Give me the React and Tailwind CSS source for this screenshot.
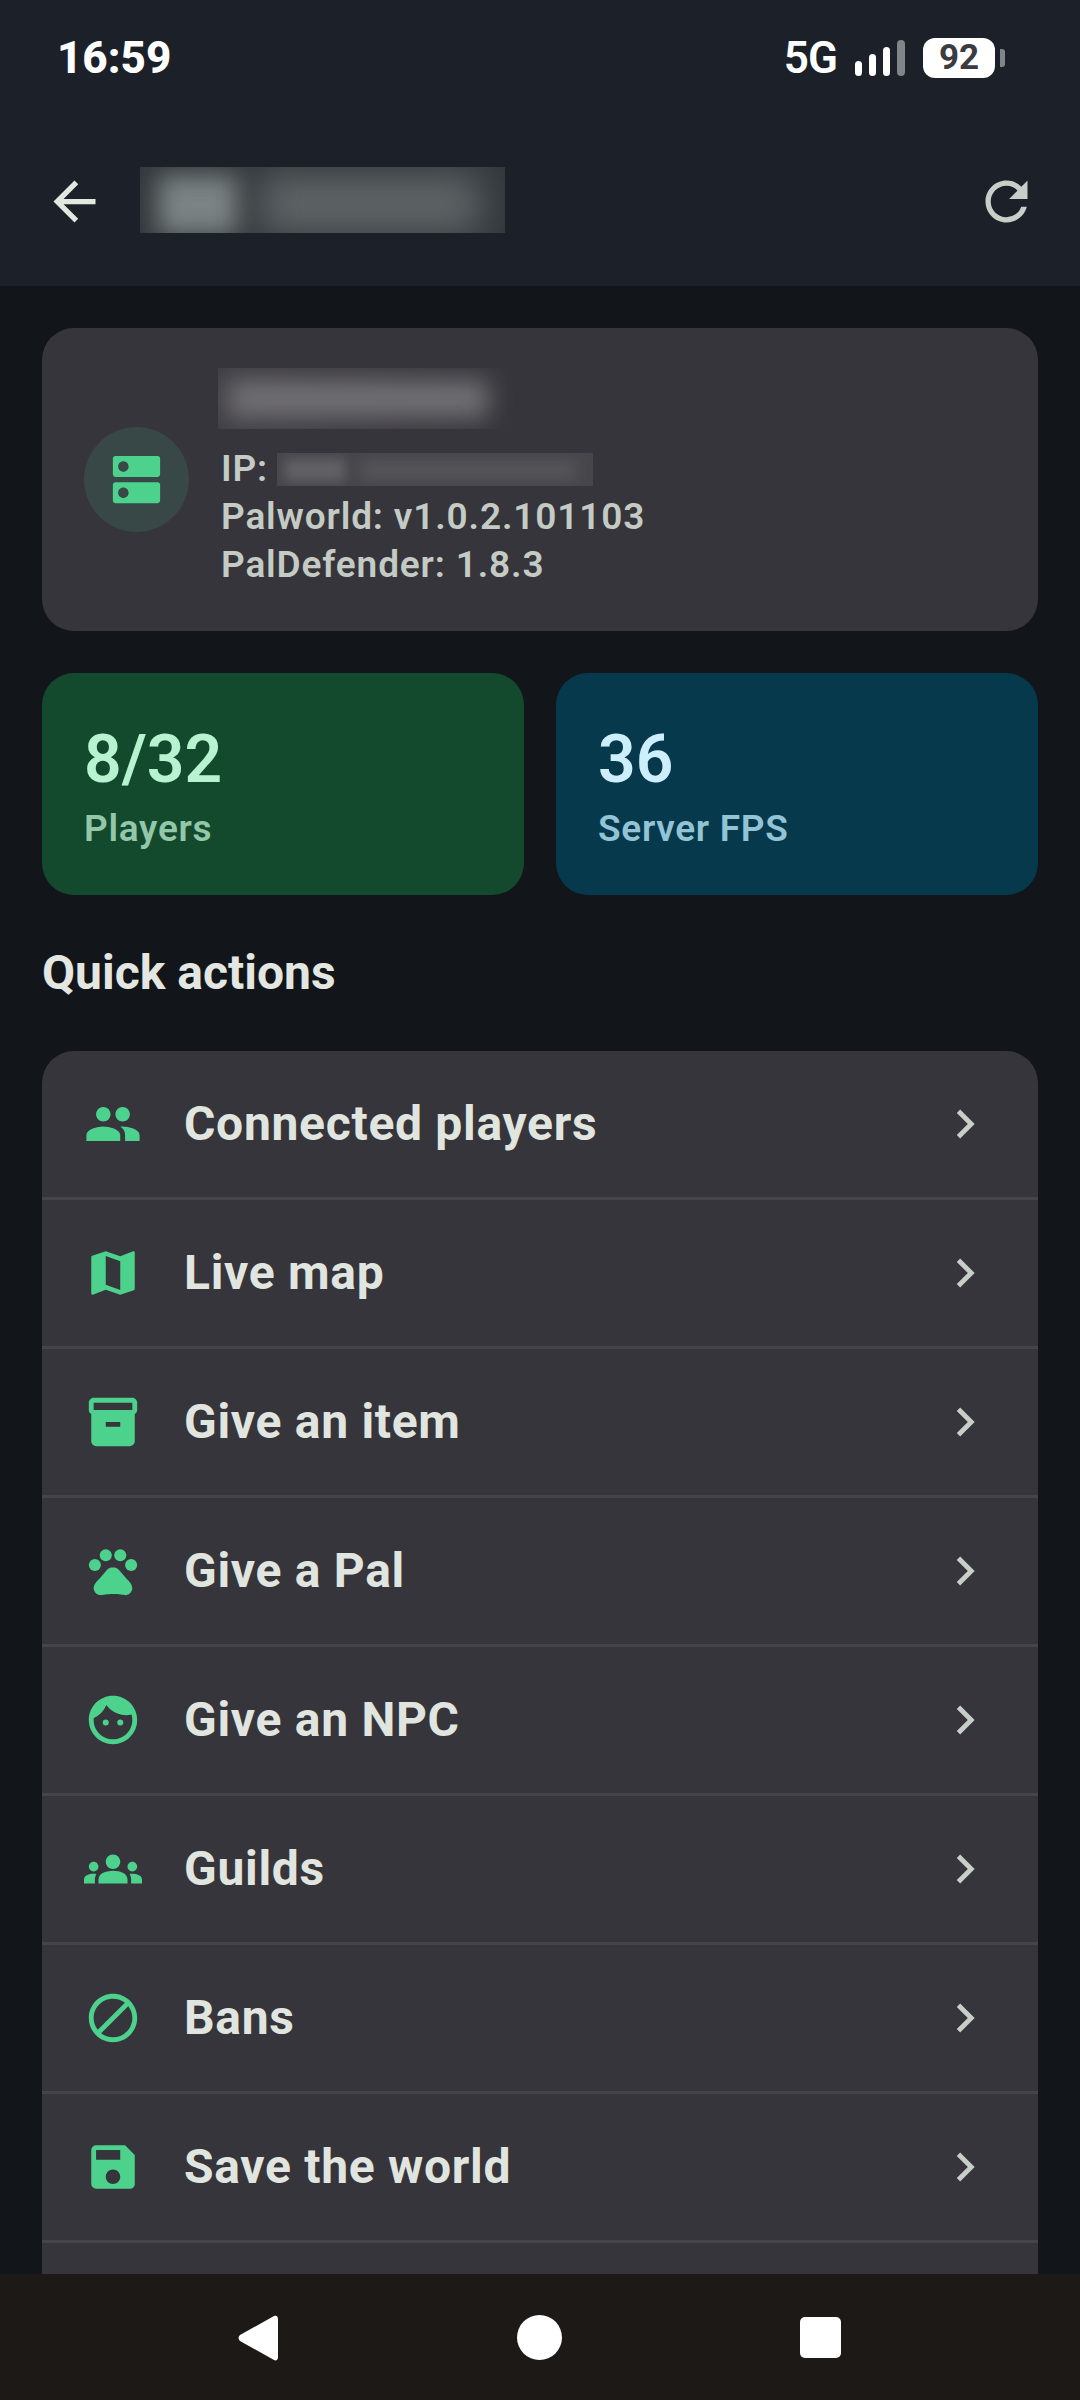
import {
  MdArrowBack,
  MdRefresh,
  MdDns,
  MdPeople,
  MdMap,
  MdInventory2,
  MdPets,
  MdFace,
  MdGroups,
  MdBlock,
  MdSave,
  MdChevronRight,
} from "react-icons/md";

const actions = [
  { label: "Connected players", icon: MdPeople },
  { label: "Live map", icon: MdMap },
  { label: "Give an item", icon: MdInventory2 },
  { label: "Give a Pal", icon: MdPets },
  { label: "Give an NPC", icon: MdFace },
  { label: "Guilds", icon: MdGroups },
  { label: "Bans", icon: MdBlock },
  { label: "Save the world", icon: MdSave },
];

function StatusBar() {
  return (
    <div className="h-[116px] flex items-start justify-between pt-[36px] pl-[57px] pr-[75px]">
      <span className="text-[44px] leading-[44px] font-extrabold text-white">16:59</span>
      <div className="flex items-center">
        <span className="text-[44px] leading-[44px] font-semibold text-white tracking-[-1px]">5G</span>
        <div className="ml-[18px] flex items-end gap-[7px] h-[36px]">
          <div className="w-[7px] h-[15px] rounded-full bg-white" />
          <div className="w-[7px] h-[22px] rounded-full bg-white" />
          <div className="w-[7px] h-[29px] rounded-full bg-white" />
          <div className="w-[8px] h-[36px] rounded-full bg-[#80858a]" />
        </div>
        <div className="ml-[18px] w-[72px] h-[40px] rounded-[12px] bg-white flex items-center justify-center text-[35px] font-bold text-[#3a3c3f]">
          92
        </div>
        <div className="ml-[5px] w-[5px] h-[18px] rounded-r-[3px] bg-[#80858a]" />
      </div>
    </div>
  );
}

function AppBar() {
  return (
    <div className="h-[170px] flex items-center justify-between pl-[43px] pr-[42px]">
      <div className="flex items-center">
        <MdArrowBack size={63} className="text-[#e2e7e0]" />
        <div className="relative ml-[34px] -mt-[2px] w-[365px] h-[66px] overflow-hidden bg-[#33383c]">
          <div className="absolute left-[18px] top-[8px] w-[80px] h-[60px] bg-[#7c8383] blur-[12px]" />
          <div className="absolute left-[120px] top-[8px] w-[220px] h-[58px] bg-[#5f6467] blur-[18px]" />
        </div>
      </div>
      <MdRefresh size={63} className="text-[#c8cfc8]" />
    </div>
  );
}

function ServerCard() {
  return (
    <div className="h-[303px] rounded-[32px] bg-[#36353b] flex items-center pl-[42px]">
      <div className="w-[105px] h-[105px] rounded-full bg-[#384846] flex items-center justify-center shrink-0">
        <MdDns size={63} className="text-[#4cd28c]" />
      </div>
      <div className="ml-[32px] -mt-[2px] text-[37px] leading-[48px] font-semibold tracking-[0.85px] text-[#c3cbc4]">
        <div className="relative -ml-[3px] mb-[16px] w-[300px] h-[61px] overflow-hidden bg-linear-to-r from-[#403f45] to-[#36353b]">
          <div className="absolute left-[10px] top-[12px] w-[260px] h-[38px] bg-[#717074] blur-[12px]" />
        </div>
        <div className="flex items-center">
          IP:
          <div className="relative ml-[9px] w-[316px] h-[33px] overflow-hidden bg-[#46464b]">
            <div className="absolute left-[8px] top-[6px] w-[60px] h-[22px] bg-[#626266] blur-[6px]" />
            <div className="absolute left-[84px] top-[8px] w-[216px] h-[18px] bg-[#55555a] blur-[7px]" />
          </div>
        </div>
        <div>Palworld: v1.0.2.101103</div>
        <div>PalDefender: 1.8.3</div>
      </div>
    </div>
  );
}

function Stat({ value, label, bg, valueColor, labelColor }) {
  return (
    <div className={`h-[222px] flex-1 rounded-[32px] pl-[42px] pt-[48px] ${bg}`}>
      <div className={`text-[66px] leading-[78px] font-semibold ${valueColor}`}>{value}</div>
      <div className={`mt-[7px] text-[37px] leading-[46px] font-semibold tracking-[0.7px] ${labelColor}`}>{label}</div>
    </div>
  );
}

function ActionRow({ label, icon: Icon }) {
  return (
    <div className="h-[149px] shrink-0 border-b-[3px] border-[#46444b] flex items-center pl-[42px] pr-[44px]">
      <div className="w-[58px] flex justify-center">
        <Icon size={58} className="text-[#4cd28c]" />
      </div>
      <span className="ml-[42px] flex-1 text-[48px] font-bold text-[#e1e5df] tracking-[0.7px]">{label}</span>
      <MdChevronRight size={58} className="text-[#c8cfc8]" />
    </div>
  );
}

export default function App() {
  return (
    <div
      className="w-[1080px] h-[2400px] flex flex-col overflow-hidden bg-[#12161b]"
      style={{ fontFamily: "Roboto, sans-serif" }}
    >
      <header className="h-[286px] shrink-0 bg-[#1c2129]">
        <StatusBar />
        <AppBar />
      </header>

      <main className="flex-1 overflow-hidden px-[42px] pt-[42px]">
        <ServerCard />

        <div className="mt-[42px] flex gap-[32px]">
          <Stat
            value="8/32"
            label="Players"
            bg="bg-[#134a2e]"
            valueColor="text-[#b7f3d0]"
            labelColor="text-[#93c7a9]"
          />
          <Stat
            value="36"
            label="Server FPS"
            bg="bg-[#07394c]"
            valueColor="text-[#cdeffb]"
            labelColor="text-[#93c4d6]"
          />
        </div>

        <h2 className="mt-[50px] h-[55px] text-[48px] leading-[55px] font-bold text-[#e3e6e1]">Quick actions</h2>

        <div className="mt-[51px] rounded-[32px] bg-[#36353b] overflow-hidden">
          {actions.map((a) => (
            <ActionRow key={a.label} label={a.label} icon={a.icon} />
          ))}
          <div className="h-[149px]" />
        </div>
      </main>

      <nav className="h-[126px] shrink-0 bg-[#1c1917]">
        <div className="relative w-full h-full">
          <svg className="absolute left-[238px] top-[41px]" width="41" height="46" viewBox="0 0 41 46">
            <path d="M36 1 C38 0 40 1 40 4 L40 42 C40 45 38 46 36 45 L2 26 C0 24 0 22 2 20 Z" fill="#fff" />
          </svg>
          <div className="absolute left-[517px] top-[41px] w-[45px] h-[45px] rounded-full bg-white" />
          <div className="absolute left-[800px] top-[43px] w-[41px] h-[41px] rounded-[5px] bg-white" />
        </div>
      </nav>
    </div>
  );
}
